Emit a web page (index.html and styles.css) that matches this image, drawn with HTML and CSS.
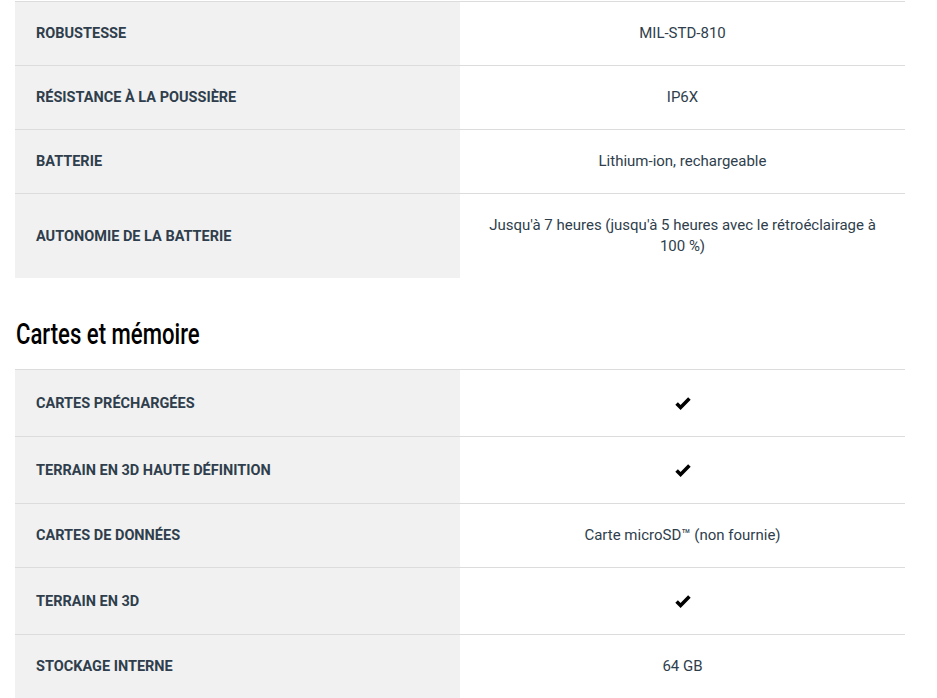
FILE: index.html
```html
<!DOCTYPE html>
<html lang="fr">
<head>
<meta charset="utf-8">
<link rel="stylesheet" href="styles.css">
</head>
<body>
<div class="page">
  <div class="specs">
    <div class="row"><div class="label">Robustesse</div><div class="value">MIL-STD-810</div></div>
    <div class="row"><div class="label">Résistance à la poussière</div><div class="value">IP6X</div></div>
    <div class="row"><div class="label">Batterie</div><div class="value">Lithium-ion, rechargeable</div></div>
    <div class="row"><div class="label">Autonomie de la batterie</div><div class="value">Jusqu'à 7 heures (jusqu'à 5 heures avec le rétroéclairage à 100 %)</div></div>
  </div>

  <h2 class="section-title"><span class="section-title-text">Cartes et mémoire</span></h2>

  <div class="specs">
    <div class="row"><div class="label">Cartes préchargées</div><div class="value"><span class="check"><svg viewBox="0 0 16 14" width="16" height="14"><polyline points="1.6,7.4 5.6,11.4 14.4,2.6" fill="none" stroke="#000" stroke-width="3.6" stroke-linejoin="miter"/></svg></span></div></div>
    <div class="row"><div class="label">Terrain en 3D haute définition</div><div class="value"><span class="check"><svg viewBox="0 0 16 14" width="16" height="14"><polyline points="1.6,7.4 5.6,11.4 14.4,2.6" fill="none" stroke="#000" stroke-width="3.6" stroke-linejoin="miter"/></svg></span></div></div>
    <div class="row"><div class="label">Cartes de données</div><div class="value">Carte microSD™ (non fournie)</div></div>
    <div class="row"><div class="label">Terrain en 3D</div><div class="value"><span class="check"><svg viewBox="0 0 16 14" width="16" height="14"><polyline points="1.6,7.4 5.6,11.4 14.4,2.6" fill="none" stroke="#000" stroke-width="3.6" stroke-linejoin="miter"/></svg></span></div></div>
    <div class="row"><div class="label">Stockage interne</div><div class="value">64 GB</div></div>
  </div>
</div>
</body>
</html>
```

FILE: styles.css
```css
html, body {
  margin: 0;
  padding: 0;
  background: #fff;
}

.page {
  padding: 1px 0 0 15px;
  width: 890px;
  font-family: Roboto, "Liberation Sans", Arial, sans-serif;
  font-size: 15px;
  line-height: 21px;
  color: #2f3e4c;
}

.specs {
  display: flex;
  flex-direction: column;
}

.row {
  display: grid;
  grid-template-columns: 445px 445px;
  border-top: 1px solid #dcdcdc;
}

.label {
  background: #f1f1f1;
  padding: 21px 21px;
  font-size: 14.5px;
  font-weight: 700;
  text-transform: uppercase;
  display: flex;
  align-items: center;
}

.value {
  padding: 21px 21px;
  text-align: center;
  display: flex;
  align-items: center;
  justify-content: center;
}

.check {
  display: flex;
  align-items: center;
  justify-content: center;
  height: 24px;
}

.section-title {
  font-family: Roboto, "Liberation Sans", sans-serif;
  font-weight: 500;
  font-size: 29px;
  line-height: 31px;
  color: #000;
  margin: 41px 0 19px 1px;
}

.section-title-text {
  display: inline-block;
  transform: scaleX(0.763);
  transform-origin: left center;
}
```
